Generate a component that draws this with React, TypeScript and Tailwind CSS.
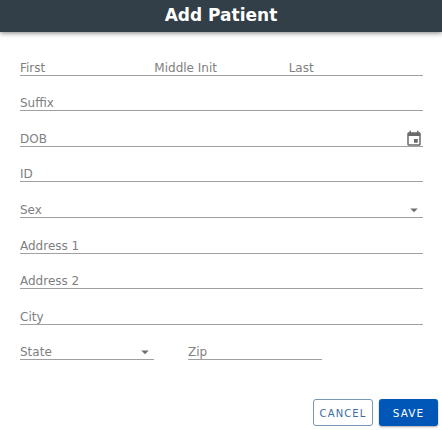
import type { ReactNode } from 'react';
import { MdArrowDropDown, MdEvent } from 'react-icons/md';

interface FieldProps {
  label: string;
  className?: string;
  children?: ReactNode;
}

function Field({ label, className = '', children }: FieldProps) {
  return (
    <div className={`flex h-[35.6px] items-end justify-between border-b border-[#a0a0a0] ${className}`}>
      <label className="-mb-px text-[12px] leading-[15px] whitespace-nowrap text-[#7f7f7f]">{label}</label>
      {children}
    </div>
  );
}

function SelectArrow() {
  return <MdArrowDropDown size={18} className="-mb-[2px] shrink-0 text-[#6f6f6f]" />;
}

export default function App() {
  return (
    <div className="flex h-[430px] w-[442px] flex-col overflow-hidden bg-white font-['DejaVu_Sans',Verdana,sans-serif]">
      <header className="flex h-8 shrink-0 items-start justify-center bg-[#333f48] shadow-[0_1px_5px_rgba(0,0,0,0.5)]">
        <h1 className="pt-[4px] text-[17px] leading-[22px] font-bold text-white">Add Patient</h1>
      </header>

      <form className="flex flex-col pt-[8px] pr-[19px] pl-5">
        <div className="grid grid-cols-3">
          <Field label="First" />
          <Field label="Middle Init" />
          <Field label="Last" />
        </div>
        <Field label="Suffix" />
        <Field label="DOB">
          <MdEvent size={18} className="-mb-[2px] shrink-0 text-[#6a6a6a]" />
        </Field>
        <Field label="ID" />
        <Field label="Sex">
          <SelectArrow />
        </Field>
        <Field label="Address 1" />
        <Field label="Address 2" />
        <Field label="City" />
        <div className="flex gap-[34px]">
          <Field label="State" className="w-[134px]">
            <SelectArrow />
          </Field>
          <Field label="Zip" className="w-[134px]" />
        </div>
      </form>

      <footer className="mt-auto flex justify-end gap-1.5 pr-1 pb-1">
        <button
          type="button"
          className="h-[27px] w-[60px] rounded-[3px] border border-[#7796b8] pt-px text-[10px] tracking-[1.1px] text-[#3c6ba5]"
        >
          CANCEL
        </button>
        <button
          type="button"
          className="h-[27px] w-[59px] rounded-[3px] bg-[#0057b8] pt-[2px] text-[10.5px] font-medium tracking-[1.1px] text-white shadow-[0_1px_2px_rgba(0,0,0,0.35)]"
        >
          SAVE
        </button>
      </footer>
    </div>
  );
}
